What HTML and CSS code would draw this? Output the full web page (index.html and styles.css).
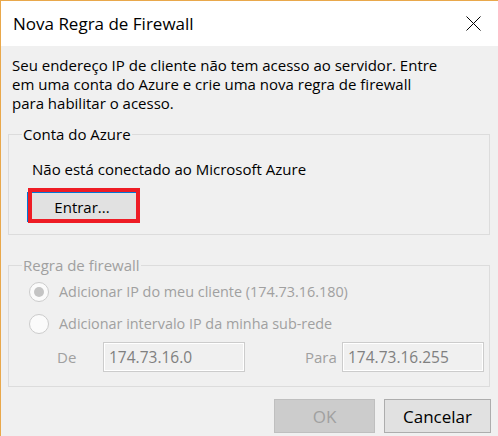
FILE: index.html
```
<!DOCTYPE html>
<html lang="pt">
<head>
<meta charset="utf-8">
<title>Nova Regra de Firewall</title>
<link rel="stylesheet" href="styles.css">
</head>
<body>
<div class="window">
  <div class="titlebar">
    <span class="title">Nova Regra de Firewall</span>
    <svg class="close" width="15" height="15" viewBox="0 0 15 15" aria-hidden="true">
      <path d="M0.5 0.5 L14.5 14.5 M14.5 0.5 L0.5 14.5" stroke="#000" stroke-width="1" fill="none"/>
    </svg>
  </div>
  <div class="content">
    <p class="intro">Seu endereço IP de cliente não tem acesso ao servidor. Entre<br>em uma conta do Azure e crie uma nova regra de firewall<br>para habilitar o acesso.</p>

    <div class="group group-account">
      <span class="group-label">Conta do Azure</span>
      <div class="status">Não está conectado ao Microsoft Azure</div>
      <div class="signin-wrap">
        <button class="btn btn-focus">Entrar...</button>
        <span class="highlight"></span>
      </div>
    </div>

    <div class="group group-rule disabled">
      <span class="group-label">Regra de firewall</span>
      <div class="radio-row">
        <span class="radio checked"></span>
        <span>Adicionar IP do meu cliente (174.73.16.180)</span>
      </div>
      <div class="radio-row">
        <span class="radio"></span>
        <span>Adicionar intervalo IP da minha sub-rede</span>
      </div>
      <div class="range-row">
        <span class="range-label from">De</span>
        <span class="field">174.73.16.0</span>
        <span class="range-label to">Para</span>
        <span class="field">174.73.16.255</span>
      </div>
    </div>

    <div class="actions">
      <button class="btn btn-disabled">OK</button>
      <button class="btn btn-cancel">Cancelar</button>
    </div>
  </div>
</div>
</body>
</html>
```

FILE: styles.css
```
* { box-sizing: border-box; }
html, body { margin: 0; padding: 0; }
body {
  width: 498px;
  height: 436px;
  overflow: hidden;
  font-family: "Open Sans", "Noto Sans", sans-serif;
  font-size: 15px;
  color: #000;
  background: #f0f0f0;
}
.window {
  width: 498px;
  height: 436px;
  border-top: 1px solid #e9a84b;
  border-left: 1px solid #e9a84b;
  background: #f0f0f0;
  display: flex;
  flex-direction: column;
}
.titlebar {
  height: 45px;
  background: #fff;
  display: flex;
  align-items: center;
  padding-left: 12px;
  flex: none;
}
.title {
  font-size: 17px;
  line-height: 24px;
}
.close {
  margin-left: auto;
  margin-right: 17px;
  display: block;
}
.content {
  flex: 1;
  padding: 0 8px 0 7px;
  display: flex;
  flex-direction: column;
}
.intro {
  margin: 10px 0 0 4px;
  white-space: nowrap;
  line-height: 19px;
}
.group {
  position: relative;
  border: 1px solid #dcdcdc;
}
.group-label {
  position: absolute;
  top: -11px;
  left: 13px;
  padding: 0 1px;
  line-height: 20px;
  background: #f0f0f0;
}
.group-account {
  margin-top: 21px;
  height: 101px;
  padding: 24px 0 0 23px;
}
.status { line-height: 20px; }
.signin-wrap {
  position: relative;
  margin-top: 13px;
  margin-left: -5px;
  width: 110px;
}
.btn {
  font-family: inherit;
  font-size: 15px;
  color: #000;
  background: #e1e1e1;
  border: 1px solid #adadad;
  padding: 0;
  display: flex;
  align-items: center;
  justify-content: center;
}
.btn-focus {
  width: 110px;
  height: 30px;
  border-color: #0078d7;
}
.highlight {
  position: absolute;
  left: 1px;
  top: -4px;
  width: 112px;
  height: 35px;
  border: 4px solid #ee1c25;
}
.group-rule {
  margin-top: 30px;
  height: 122px;
  padding: 16px 0 0 20px;
}
.disabled { color: #a0a0a0; }
.radio-row {
  display: flex;
  align-items: center;
  gap: 10px;
  height: 20px;
  margin-bottom: 12px;
  line-height: 20px;
  font-size: 14.4px;
}
.radio {
  width: 20px;
  height: 20px;
  border-radius: 50%;
  border: 1px solid #cccccc;
  background: #fbfbfb;
  display: flex;
  align-items: center;
  justify-content: center;
  flex: none;
}
.radio.checked::after {
  content: "";
  width: 10px;
  height: 10px;
  border-radius: 50%;
  background: #c4c4c4;
}
.range-row {
  display: flex;
  align-items: center;
  height: 30px;
  margin-top: -4px;
}
.range-label.from { margin-left: 28px; width: 46px; }
.range-label.to { margin-left: 60px; width: 37px; }
.field {
  width: 142px;
  height: 30px;
  border: 1px solid #cccccc;
  box-shadow: inset 0 0 0 1px #fff;
  padding-left: 5px;
  font-size: 15.5px;
  line-height: 28px;
  color: #808080;
}
.actions {
  display: flex;
  justify-content: flex-end;
  gap: 9px;
  margin-top: 12px;
  margin-right: -1px;
}
.actions .btn {
  height: 34px;
  font-size: 17px;
}
.btn-disabled {
  width: 101px;
  background: #cccccc;
  border-color: #bfbfbf;
  color: #a0a0a0;
}
.btn-cancel { width: 107px; }
```
